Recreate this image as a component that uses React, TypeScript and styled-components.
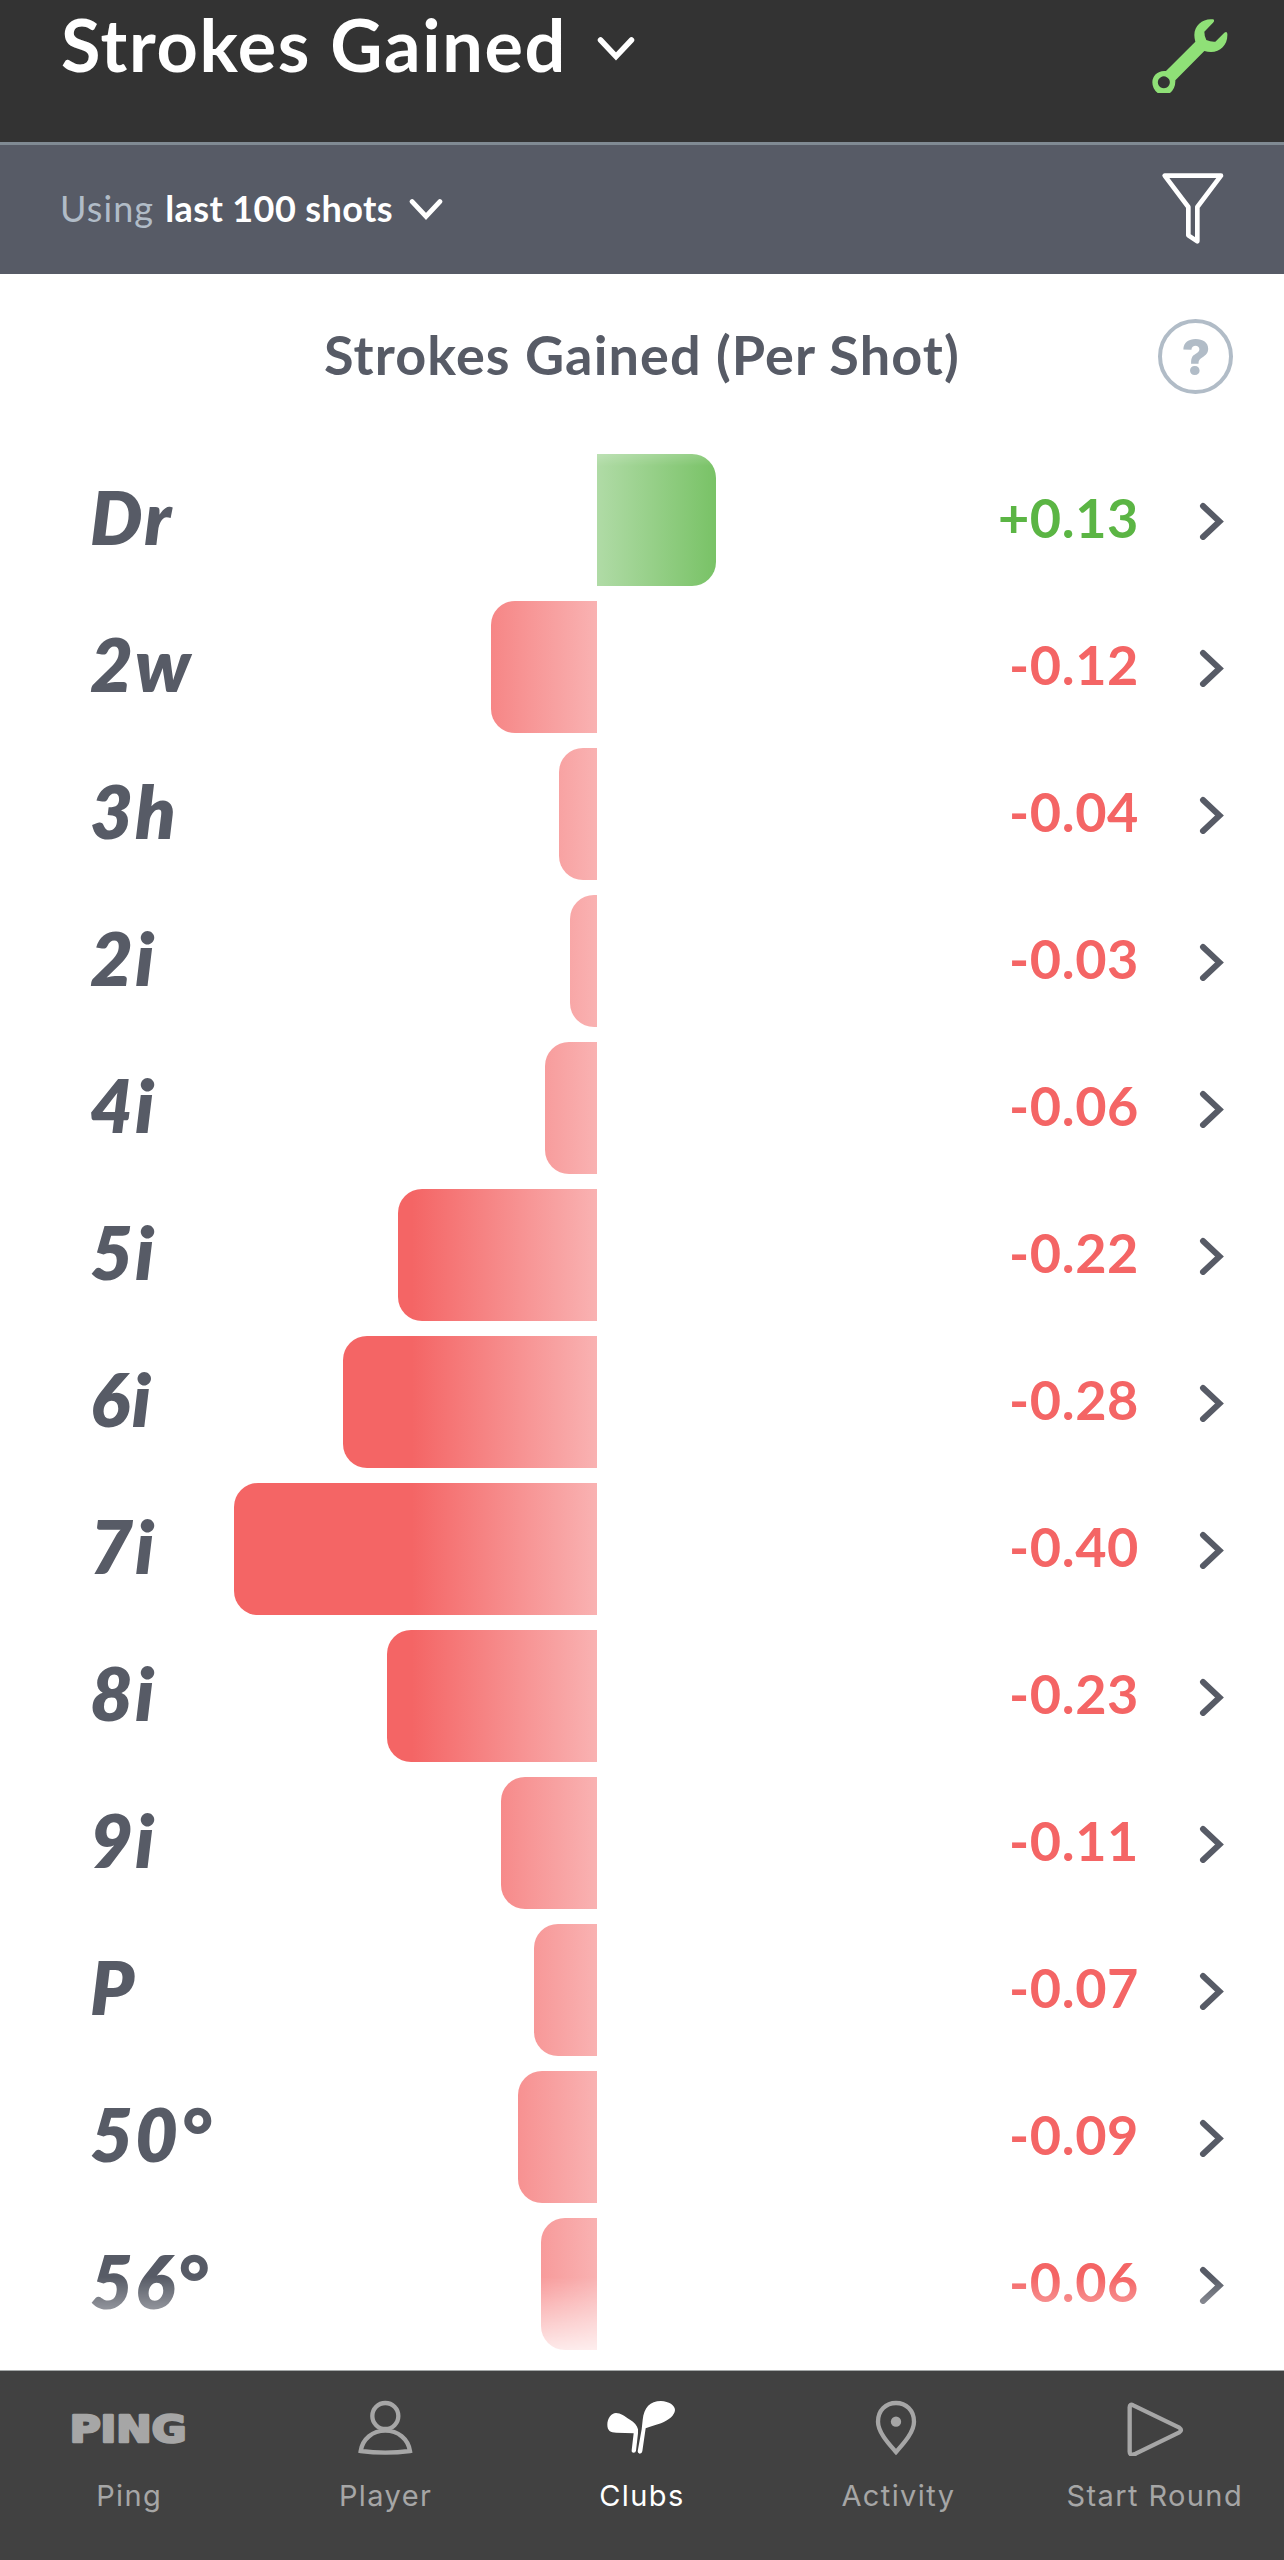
import React from "react";
import styled, { createGlobalStyle, css } from "styled-components";

const slate = "#575b66";
const red = "#f46565";
const green = "#5bb544";

const GlobalStyle = createGlobalStyle`
  *, *::before, *::after { box-sizing: border-box; }
  body { margin: 0; background: #fff; }
`;

const Screen = styled.div`
  width: 1284px;
  height: 2560px;
  display: flex;
  flex-direction: column;
  overflow: hidden;
  background: #fff;
  color: ${slate};
  font-family: Lato, "Liberation Sans", sans-serif;
`;

const Header = styled.header`
  height: 145px;
  flex: none;
  display: flex;
  justify-content: space-between;
  align-items: flex-start;
  padding: 8px 56px 0 61px;
  background: #333;
  border-bottom: 3px solid #808a93;
`;

const TitleButton = styled.div`
  display: flex;
  align-items: center;
  gap: 30px;
  color: #fff;
`;

const Title = styled.h1`
  margin: 0;
  font-size: 72px;
  line-height: 72px;
  font-weight: 700;
  letter-spacing: 1.65px;
`;

const WrenchIcon = styled.svg`
  width: 76px;
  height: 76px;
  margin-top: 10px;
  fill: #8fe077;
`;

const FilterBar = styled.div`
  height: 129px;
  flex: none;
  display: flex;
  justify-content: space-between;
  align-items: center;
  padding: 0 59px 4px 60px;
  background: #575b66;
`;

const RangePicker = styled.div`
  display: flex;
  align-items: center;
  font-size: 36px;
  line-height: 44px;
  color: #fff;
`;

const RangePrefix = styled.span`
  margin-right: 11px;
  color: #b1bcc7;
  letter-spacing: 1.1px;
`;

const RangeValue = styled.span`
  margin-right: 16px;
  font-weight: 700;
  letter-spacing: 0.4px;
`;

const ChevronDown = styled.svg<{ $width: number; $drop: number }>`
  width: ${(p) => p.$width}px;
  height: auto;
  flex: none;
  margin-top: ${(p) => p.$drop}px;
  fill: none;
  stroke: currentColor;
  stroke-width: 5.5;
  stroke-linecap: round;
`;

const FunnelIcon = styled.svg`
  width: 64px;
  height: 74px;
  margin-top: 2px;
  fill: none;
  stroke: #fff;
  stroke-width: 14;
  stroke-linejoin: round;
`;

const SectionHead = styled.div`
  height: 120px;
  flex: none;
  display: grid;
  grid-template-columns: 1fr auto 1fr;
  align-items: center;
  padding: 45px 51px 0;
`;

const SectionTitle = styled.h2`
  grid-column: 2;
  margin: 0;
  padding-bottom: 3px;
  font-size: 54px;
  line-height: 66px;
  font-weight: 700;
  letter-spacing: 1.1px;
  white-space: nowrap;
`;

const HelpButton = styled.div`
  justify-self: end;
  width: 75px;
  height: 75px;
  display: flex;
  align-items: center;
  justify-content: center;
  padding-left: 1px;
  border: 4px solid #b1bcc7;
  border-radius: 50%;
  color: #b1bcc7;
  font-family: Inter, sans-serif;
  font-size: 50px;
  line-height: 50px;
  font-weight: 800;
`;

const ClubList = styled.ul`
  flex: 1;
  margin: 0;
  padding: 52px 0 0;
  list-style: none;
  mask-image: linear-gradient(
    to bottom,
    transparent,
    #000 72px,
    #000 calc(100% - 93px),
    transparent
  );
`;

const ClubRow = styled.li`
  height: 147px;
  display: flex;
  align-items: center;
  padding: 0 59px 0 90px;
`;

const ClubName = styled.span`
  width: 144px;
  margin-top: -6px;
  font-size: 74px;
  line-height: 88px;
  font-style: italic;
  font-weight: 800;
  letter-spacing: 2.2px;
`;

const Chart = styled.div`
  width: 726px;
  display: grid;
  grid-template-columns: 1fr 1fr;
`;

const Bar = styled.div<{ $gain: boolean }>`
  height: 132px;
  background-repeat: no-repeat;
  ${(p) =>
    p.$gain
      ? css`
          grid-column: 2;
          justify-self: start;
          border-radius: 0 24px 24px 0;
          background-image: linear-gradient(to right, #b0dba6, ${green} 183px);
        `
      : css`
          grid-column: 1;
          justify-self: end;
          border-radius: 24px 0 0 24px;
          background-image: linear-gradient(to left, #f9b2b2, ${red} 185px);
        `}
`;

const Score = styled.span<{ $gain: boolean }>`
  flex: 1;
  margin: -4px 60px 0 0;
  text-align: right;
  font-size: 54px;
  line-height: 66px;
  font-weight: 700;
  letter-spacing: 0.6px;
  color: ${(p) => (p.$gain ? green : red)};
`;

const ChevronRight = styled.svg`
  width: 26px;
  height: 38px;
  margin-top: 2px;
  flex: none;
  fill: none;
  stroke: ${slate};
  stroke-width: 6;
  stroke-linecap: round;
`;

const TabBar = styled.nav`
  height: 190px;
  flex: none;
  display: grid;
  grid-template-columns: repeat(5, 256.4px);
  background: #414141;
  border-top: 1px solid #a5a8a8;
`;

const Tab = styled.div<{ $active?: boolean }>`
  display: flex;
  flex-direction: column;
  align-items: center;
  padding-top: 29px;
  color: ${(p) => (p.$active ? "#fff" : "#a6a6a6")};
  font-family: Inter, sans-serif;
  font-size: 29px;
  line-height: 36px;
`;

const TabLabel = styled.span`
  padding-left: 2px;
  letter-spacing: 1.4px;
`;

const TabIcon = styled.svg`
  width: 120px;
  height: 56px;
  margin-bottom: 22px;
  fill: none;
  stroke: currentColor;
  stroke-width: 13;
`;

const Filled = styled.g`
  fill: currentColor;
  stroke: none;
`;

const Wordmark = styled.text`
  fill: currentColor;
  stroke: currentColor;
  stroke-width: 8;
  stroke-linejoin: round;
  font-family: "DejaVu Sans", sans-serif;
  font-size: 112px;
  font-weight: 700;
`;

const clubs: { name: string; score: string; width: number }[] = [
  { name: "Dr", score: "+0.13", width: 119 },
  { name: "2w", score: "-0.12", width: 106 },
  { name: "3h", score: "-0.04", width: 38 },
  { name: "2i", score: "-0.03", width: 27 },
  { name: "4i", score: "-0.06", width: 52 },
  { name: "5i", score: "-0.22", width: 199 },
  { name: "6i", score: "-0.28", width: 254 },
  { name: "7i", score: "-0.40", width: 363 },
  { name: "8i", score: "-0.23", width: 210 },
  { name: "9i", score: "-0.11", width: 96 },
  { name: "P", score: "-0.07", width: 63 },
  { name: "50°", score: "-0.09", width: 79 },
  { name: "56°", score: "-0.06", width: 56 },
];

const tabs = [
  {
    label: "Ping",
    icon: (
      <Wordmark x="5" y="125" textLength="350" lengthAdjust="spacingAndGlyphs">
        PING
      </Wordmark>
    ),
  },
  {
    label: "Player",
    icon: (
      <>
        <circle cx="181" cy="48" r="39" />
        <path d="M107 153 C113 116 143 92 181 92 C219 92 249 116 255 153 Q181 163 107 153 Z" />
      </>
    ),
  },
  {
    label: "Clubs",
    active: true,
    icon: (
      <Filled>
        <path d="M79 74 C79 56 91 39 105 39 C119 39 131 49 147 59 C160 67 168 75 171 88 L171 100 L165 152 Q164 158 158 158 Q151 158 152 151 L158 100 L106 98 C88 97 79 92 79 74 Z" />
        <path d="M182 88 L185 60 C189 22 207 3 240 3 C264 4 282 16 282 30 C281 46 264 60 240 70 C224 76 208 79 194 85 L184 154 Q183 161 176 161 Q170 160 170 154 Z" />
      </Filled>
    ),
  },
  {
    label: "Activity",
    icon: (
      <>
        <path d="M177 156 C158 134 123 98 123 65 C123 31 147 9 177 9 C207 9 231 31 231 65 C231 98 196 134 177 156 Z" />
        <Filled>
          <circle cx="177" cy="65" r="15.5" />
        </Filled>
      </>
    ),
  },
  {
    label: "Start Round",
    icon: (
      <path
        strokeLinejoin="round"
        d="M107 22 Q107 10 118 16 L256 83 Q266 90 256 97 L125 161 Q107 169 107 155 Z"
      />
    ),
  },
];

export default function App() {
  return (
    <Screen>
      <GlobalStyle />
      <Header>
        <TitleButton>
          <Title>Strokes Gained</Title>
          <ChevronDown $width={38} $drop={8} viewBox="0 0 38 25">
            <path d="M3.5 4 L19 20.5 L34.5 4" />
          </ChevronDown>
        </TitleButton>
        <WrenchIcon viewBox="203 54 228 228">
          <path
            fillRule="evenodd"
            d="M387 58 Q392 62 386 68 L360 95 Q360 109 366 120 Q379 126 393 125 L420 98 Q428 93 429 101 C431 134 409 156 380 156 Q370 156 360 153 L273 241 Q274 264 257 279 H220 Q204 267 204 247 C204 226 222 210 245 213 L333 125 Q330 115 330 105 C330 75 357 54 387 58 Z M238.500 229 a18 18 0 1 0 0.010 0 Z"
          />
        </WrenchIcon>
      </Header>

      <FilterBar>
        <RangePicker>
          <RangePrefix>Using</RangePrefix>
          <RangeValue>last 100 shots</RangeValue>
          <ChevronDown $width={34} $drop={4} viewBox="0 0 38 25">
            <path d="M3.5 4 L19 20.5 L34.5 4" />
          </ChevronDown>
        </RangePicker>
        <FunnelIcon viewBox="230 514 192 222">
          <path d="M241 525 H410 L339 619 V722 L312 704 V619 Z" />
        </FunnelIcon>
      </FilterBar>

      <SectionHead>
        <SectionTitle>Strokes Gained (Per Shot)</SectionTitle>
        <HelpButton>?</HelpButton>
      </SectionHead>

      <ClubList>
        {clubs.map((club) => {
          const gain = club.score.startsWith("+");
          return (
            <ClubRow key={club.name}>
              <ClubName>{club.name}</ClubName>
              <Chart>
                <Bar $gain={gain} style={{ width: club.width }} />
              </Chart>
              <Score $gain={gain}>{club.score}</Score>
              <ChevronRight viewBox="0 0 26 38">
                <path d="M4 4 L20.500 19.500 L4 35" />
              </ChevronRight>
            </ClubRow>
          );
        })}
      </ClubList>

      <TabBar>
        {tabs.map((tab) => (
          <Tab key={tab.label} $active={tab.active}>
            <TabIcon viewBox="0 0 360 168">{tab.icon}</TabIcon>
            <TabLabel>{tab.label}</TabLabel>
          </Tab>
        ))}
      </TabBar>
    </Screen>
  );
}
